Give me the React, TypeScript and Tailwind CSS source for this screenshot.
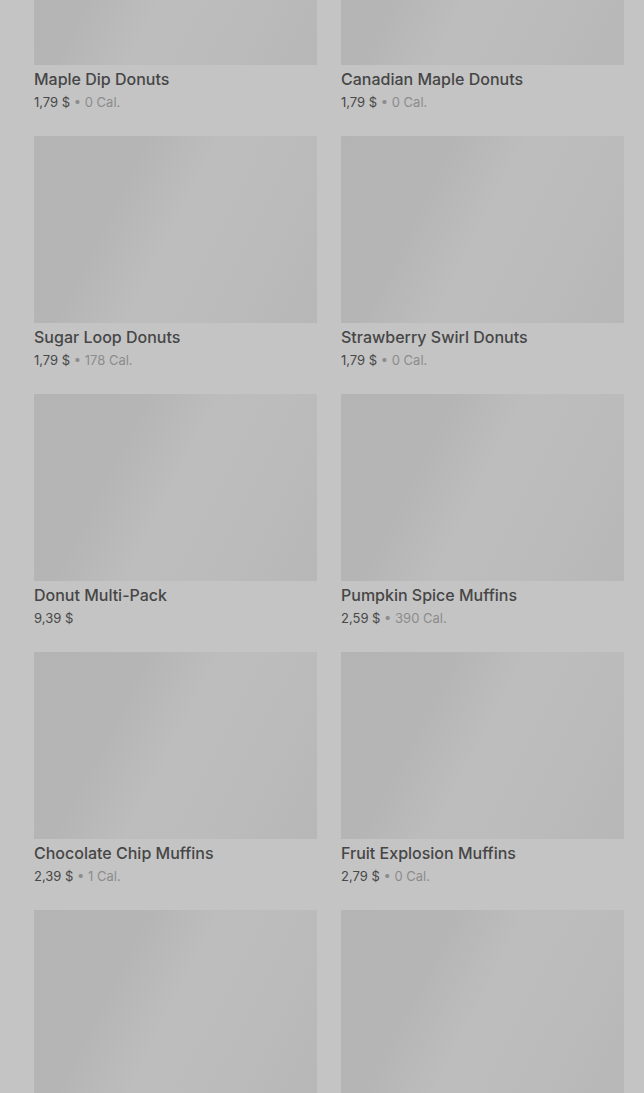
const items = [
  { name: 'Maple Dip Donuts', price: '1,79 $', cal: '0 Cal.' },
  { name: 'Canadian Maple Donuts', price: '1,79 $', cal: '0 Cal.' },
  { name: 'Sugar Loop Donuts', price: '1,79 $', cal: '178 Cal.' },
  { name: 'Strawberry Swirl Donuts', price: '1,79 $', cal: '0 Cal.' },
  { name: 'Donut Multi-Pack', price: '9,39 $' },
  { name: 'Pumpkin Spice Muffins', price: '2,59 $', cal: '390 Cal.' },
  { name: 'Chocolate Chip Muffins', price: '2,39 $', cal: '1 Cal.' },
  { name: 'Fruit Explosion Muffins', price: '2,79 $', cal: '0 Cal.' },
  { name: 'Blueberry Muffins', price: '2,39 $', cal: '0 Cal.' },
  { name: 'Banana Nut Muffins', price: '2,39 $', cal: '0 Cal.' },
]

interface Item {
  name: string
  price: string
  cal?: string
}

function ItemCard({ item }: { item: Item }) {
  return (
    <div className="flex flex-col">
      {/* image placeholder (shimmer) */}
      <div className="h-[187px] w-full bg-[linear-gradient(117deg,#b4b4b4_0%,#b5b5b5_30%,#bdbdbd_50%,#bcbcbc_68%,#b7b7b7_100%)]" />
      <div className="mt-[2px] text-[16px] leading-[24px] font-medium text-[#464646] truncate">
        {item.name}
      </div>
      <div className="mt-[1px] text-[13px] leading-[20px] text-[#484848]">
        {item.price}
        {item.cal && <span className="text-[#8c8c8c]"> • {item.cal}</span>}
      </div>
    </div>
  )
}

export default function App() {
  return (
    <div
      className="h-[1093px] w-full overflow-hidden bg-[#c4c4c4]"
      style={{ fontFamily: 'Inter, "Noto Sans", sans-serif' }}
    >
      <div className="-mt-[122px] pl-[34px] pr-[20px] grid grid-cols-2 gap-x-[24px] gap-y-[24px]">
        {items.map((item) => (
          <ItemCard key={item.name} item={item} />
        ))}
      </div>
    </div>
  )
}
